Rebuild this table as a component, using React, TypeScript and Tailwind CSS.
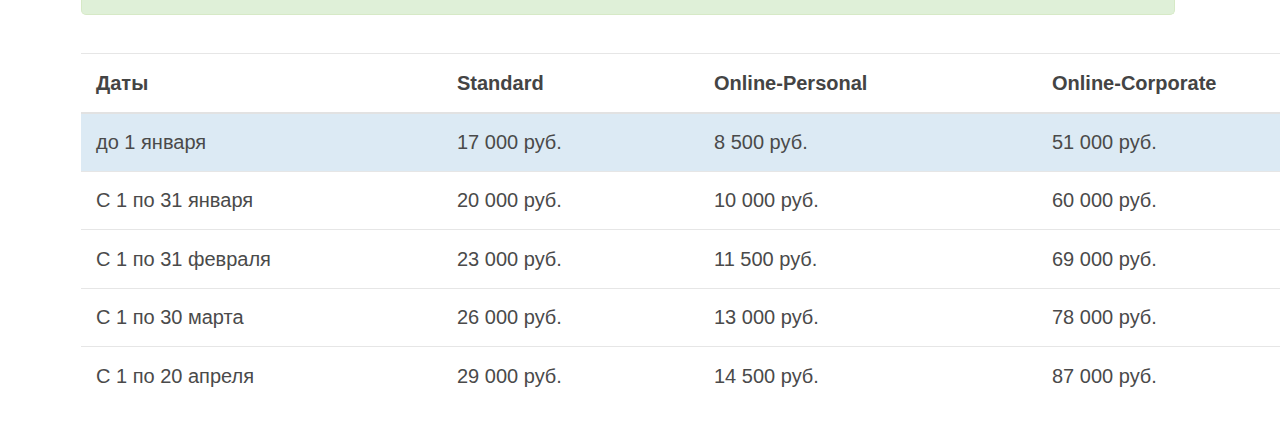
const rows = [
  ['до 1 января', '17 000 руб.', '8 500 руб.', '51 000 руб.'],
  ['С 1 по 31 января', '20 000 руб.', '10 000 руб.', '60 000 руб.'],
  ['С 1 по 31 февраля', '23 000 руб.', '11 500 руб.', '69 000 руб.'],
  ['С 1 по 30 марта', '26 000 руб.', '13 000 руб.', '78 000 руб.'],
  ['С 1 по 20 апреля', '29 000 руб.', '14 500 руб.', '87 000 руб.'],
];

export default function App() {
  return (
    <div className="w-[1280px] h-[430px] overflow-hidden bg-white font-['Liberation_Sans',Arial,sans-serif] text-[20px] text-[#4a4a4a]">
      <div className="pl-[81px]">
        {/* alert remnant */}
        <div className="w-[1094px] h-[15px] bg-[#dff0d8] border border-t-0 border-[#d6e9c6] rounded-b-[5px]" />

        <table className="mt-[38px] w-[1260px] table-fixed border-collapse border-t border-[#e6e6e6]">
          <colgroup>
            <col className="w-[361px]" />
            <col className="w-[257px]" />
            <col className="w-[338px]" />
            <col />
          </colgroup>
          <thead>
            <tr className="border-b-2 border-[#e2e2e2]">
              {['Даты', 'Standard', 'Online-Personal', 'Online-Corporate'].map((h) => (
                <th key={h} className="h-[59px] px-[15px] text-left font-bold text-[#444]">
                  {h}
                </th>
              ))}
            </tr>
          </thead>
          <tbody>
            {rows.map((r, i) => (
              <tr key={i} className={i === 0 ? 'bg-[#dceaf4] border-b border-[#e6e6e6]' : 'border-b border-[#e6e6e6] last:border-b-0'}>
                {r.map((c, j) => (
                  <td key={j} className="h-[58.5px] px-[15px]">
                    {c}
                  </td>
                ))}
              </tr>
            ))}
          </tbody>
        </table>
      </div>
    </div>
  );
}
